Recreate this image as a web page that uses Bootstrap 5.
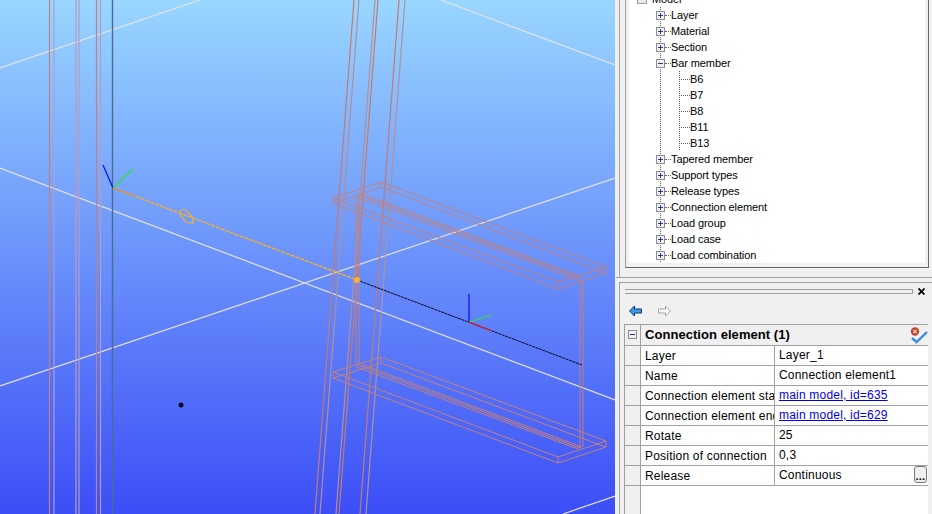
<!DOCTYPE html>
<html lang="en">
<head>
    <meta charset="UTF-8">
    <meta name="viewport" content="width=device-width, initial-scale=1.0">
    <link href="https://cdn.jsdelivr.net/npm/bootstrap@5.3.0/dist/css/bootstrap.min.css" rel="stylesheet">
    <title>Model</title>
    <style>
        body { width: 932px; height: 514px; overflow: hidden; background: #f0f0f0; font-family: "Liberation Sans", Arial, sans-serif; font-size: 11px; letter-spacing: -.1px; color: #000; }
        .view3d { width: 615px; height: 514px; flex: none; background: linear-gradient(#99d6ff, #3c4ef7); }
        .view3d svg { display: block; }
        .side { width: 317px; flex: none; }
        .pane-top { height: 277px; margin-left: 4px; border-left: 1px solid #a0a0a0; padding-left: 5px; }
        .tree-frame { width: 304px; height: 268px; overflow: hidden; background: #fff; border-left: 1px solid #a0a0a0; border-right: 1px solid #696969; border-bottom: 1px solid #696969; box-shadow: inset 3px 0 #f0f0f0, inset -3px 0 #f0f0f0, inset 0 -4px #f0f0f0; }
        .tree-root, .tree-kids { list-style: none; margin: 0; padding: 0; }
        .tree-model { margin-top: -9px; padding-left: 11px; }
        .tree-root { margin-left: 30px; background: linear-gradient(#606060 50%, transparent 50%) 4px 0 / 1px 2px repeat-y; }
        .tree-row { height: 16px; line-height: 16px; white-space: nowrap; }
        .tree-last { margin-bottom: -8px; }
        .tree-box { width: 9px; height: 9px; flex: none; }
        .tree-dash { width: 6px; flex: none; border-top: 1px dotted #606060; margin-right: 0; }
        .tree-kids { margin-left: 23px; background: linear-gradient(#606060 50%, transparent 50%) 0 0 / 1px 2px repeat-y; }
        .tree-kids .tree-dash { width: 11px; }
        .tree-gap { height: 8px; }
        .model-check { width: 10px; height: 10px; background: #e8e8e8; border: 1px solid #a0a0a0; margin-right: 5px; }
        .split { height: 5px; margin-left: 1px; border-top: 1px solid #a0a0a0; }
        .pane-bottom { height: 232px; margin-left: 4px; border-left: 1px solid #a0a0a0; border-top: 1px solid #a0a0a0; overflow: hidden; padding-left: 4px; font-size: 12px; letter-spacing: .2px; }
        .grip-row { margin-top: 6px; margin-left: 1px; height: 5px; width: 303px; }
        .grip-lines { width: 288px; height: 5px; border-top: 1px solid #a0a0a0; border-bottom: 1px solid #a0a0a0; border-right: 1px solid #a0a0a0; }
        .grip-close { margin-left: 5px; display: block; }
        .nav-row { margin-top: 11px; height: 13px; padding-left: 5px; }
        .prop-wrap { margin-top: 6px; width: 304px; border-top: 1px solid #a0a0a0; }
        .prop-table { table-layout: fixed; width: 304px; margin: 0; background: #fff; border-collapse: collapse; }
        .prop-table td { height: 20px; padding: 0; line-height: 18px; border: 0; border-bottom: 1px solid #a0a0a0; border-left: 1px solid #a0a0a0; white-space: nowrap; overflow: hidden; }
        .prop-table td.gutter { background: #f0f0f0; padding-left: 3px; }
        .prop-table td.prop-name { padding: 1px 0 0 4px; }
        .prop-table td.prop-val { padding: 0 0 1px 4px; }
        .prop-table tr.prop-head td { background: #f0f0f0; font-weight: 700; font-size: 13px; letter-spacing: .05px; padding-left: 4px; }
        .prop-table tr.prop-head td.gutter { padding: 0 0 0 3px; }
        .prop-table tr.prop-fill td { height: 40px; border-bottom: 0; }
        .prop-table a { color: #0000ee; }
        .head-icons { width: 18px; height: 19px; flex: none; }
        .more-btn { width: 13px; height: 17px; margin-right: 1px; border: 1px solid #777; border-radius: 3px; background: #efefef; font: bold 11px/19px "Liberation Sans", sans-serif; text-align: center; flex: none; }
    </style>
</head>
<body class="d-flex m-0">
    <svg width="0" height="0" class="d-block" style="position:absolute">
        <symbol id="boxPlus" viewBox="0 0 9 9"><rect x=".5" y=".5" width="8" height="8" fill="#f0f0f4" stroke="#8c8c8c"/><path d="M2 4.5h5M4.5 2v5" stroke="#23407e"/></symbol>
        <symbol id="boxMinus" viewBox="0 0 9 9"><rect x=".5" y=".5" width="8" height="8" fill="#f0f0f4" stroke="#8c8c8c"/><path d="M2 4.5h5" stroke="#23407e"/></symbol>
    </svg>

    <div class="view3d">
        <svg width="615" height="514" viewBox="0 0 615 514" fill="none">
            <g stroke="#e6e2de" stroke-width="1.2">
                <path d="M0 68L200 0M441 0L615 65M0 168L615 400M0 386L615 178M563 514L615 496"/>
            </g>
            <g stroke-width="1.2">
                <path d="M49.5 0V514M96.5 0V514" stroke="#bf8088"/>
                <path d="M54 0V514M76 0V514M79 0V514M100.5 0V514" stroke="#b89cc0"/>
                <path d="M112.5 0V514" stroke="#4c6a94" stroke-width="1.4"/>
                <path d="M354 0L315 514M378 0L339 514M399 0L360 514" stroke="#c47a72"/>
                <path d="M359 0L320 514M375 0L336 514M405 0L366 514" stroke="#b0909c"/>
            </g>
            <g stroke="#c4807a">
                <path d="M333 198L381 182L606 267L558 282ZM333 203L381 187L605 273L558 289ZM333 198V203M558 282V289M606 267V273M381 182V187"/>
                <path d="M356 197L578 280M359 195L580 278M362 194L582 277"/>
                <path d="M356 197V365M359 196V365M580 280V448M583 279V447"/>
                <path d="M333 372L381 357L606 441L558 457ZM333 378L381 363L606 447L558 463ZM333 372V378M558 457V463M606 441V447M381 357V363"/>
                <path d="M356 367L578 449M358 365L580 448M361 364L582 447"/>
            </g>
            <path d="M113 188L357 280" stroke="#ffb020" stroke-width="1.3" stroke-dasharray="4 1"/>
            <path d="M113 188L135 196" stroke="#f08030" stroke-width="1.2"/>
            <path d="M357 280L582 365" stroke="#0a0a20" stroke-width="1" stroke-dasharray="3 .6"/>
            <path d="M180 210L186 210L193 218L193 223L186 222L181 216Z" stroke="#f5ab3c" stroke-width="1.2"/>
            <circle cx="357" cy="280" r="3" fill="#ffb030"/>
            <path d="M113 188L103 165M469 322V294" stroke="#1414e6" stroke-width="1.3"/>
            <path d="M113 188L133 169M469 322L492 315" stroke="#30e040" stroke-width="1.3"/>
            <path d="M469 322L492 331" stroke="#f01818" stroke-width="1.3"/>
            <circle cx="181" cy="405" r="2.5" fill="#0a0a20"/>
        </svg>
    </div>

    <div class="side">
        <div class="pane-top">
            <div class="tree-frame">
                <div class="tree-model tree-row d-flex align-items-center">
                    <span class="model-check"></span><span>Model</span>
                </div>
                <ul class="tree-root">
                    <li class="tree-row d-flex align-items-center"><svg class="tree-box"><use href="#boxPlus"/></svg><span class="tree-dash"></span>Layer</li>
                    <li class="tree-row d-flex align-items-center"><svg class="tree-box"><use href="#boxPlus"/></svg><span class="tree-dash"></span>Material</li>
                    <li class="tree-row d-flex align-items-center"><svg class="tree-box"><use href="#boxPlus"/></svg><span class="tree-dash"></span>Section</li>
                    <li>
                        <div class="tree-row d-flex align-items-center"><svg class="tree-box"><use href="#boxMinus"/></svg><span class="tree-dash"></span>Bar member</div>
                        <ul class="tree-kids">
                            <li class="tree-row d-flex align-items-center"><span class="tree-dash"></span>B6</li>
                            <li class="tree-row d-flex align-items-center"><span class="tree-dash"></span>B7</li>
                            <li class="tree-row d-flex align-items-center"><span class="tree-dash"></span>B8</li>
                            <li class="tree-row d-flex align-items-center"><span class="tree-dash"></span>B11</li>
                            <li class="tree-row tree-last d-flex align-items-center"><span class="tree-dash"></span>B13</li>
                        </ul>
                        <div class="tree-gap"></div>
                    </li>
                    <li class="tree-row d-flex align-items-center"><svg class="tree-box"><use href="#boxPlus"/></svg><span class="tree-dash"></span>Tapered member</li>
                    <li class="tree-row d-flex align-items-center"><svg class="tree-box"><use href="#boxPlus"/></svg><span class="tree-dash"></span>Support types</li>
                    <li class="tree-row d-flex align-items-center"><svg class="tree-box"><use href="#boxPlus"/></svg><span class="tree-dash"></span>Release types</li>
                    <li class="tree-row d-flex align-items-center"><svg class="tree-box"><use href="#boxPlus"/></svg><span class="tree-dash"></span>Connection element</li>
                    <li class="tree-row d-flex align-items-center"><svg class="tree-box"><use href="#boxPlus"/></svg><span class="tree-dash"></span>Load group</li>
                    <li class="tree-row d-flex align-items-center"><svg class="tree-box"><use href="#boxPlus"/></svg><span class="tree-dash"></span>Load case</li>
                    <li class="tree-row tree-last d-flex align-items-center"><svg class="tree-box"><use href="#boxPlus"/></svg><span class="tree-dash"></span>Load combination</li>
                </ul>
            </div>
        </div>
        <div class="split"></div>
        <div class="pane-bottom">
            <div class="grip-row d-flex align-items-center">
                <div class="grip-lines"></div>
                <svg class="grip-close" width="7" height="7" viewBox="0 0 7 7"><path d="M.5 .5L6.5 6.5M6.5 .5L.5 6.5" stroke="#000" stroke-width="1.8"/></svg>
            </div>
            <div class="nav-row d-flex gap-3">
                <svg width="13" height="12" viewBox="0 0 13 12"><path d="M.5 6L5.5 1V4H12.5V8H5.5V11Z" fill="#3d9ae8" stroke="#10307a"/></svg>
                <svg width="13" height="12" viewBox="0 0 13 12"><path d="M12.5 6L7.5 1V4H.5V8H7.5V11Z" fill="#f6f6f6" stroke="#a4a4a4"/></svg>
            </div>
            <div class="prop-wrap">
                <table class="prop-table">
                    <colgroup><col style="width:16px"><col style="width:134px"><col></colgroup>
                    <tr class="prop-head">
                        <td class="gutter"><svg width="9" height="9" class="d-block"><use href="#boxMinus"/></svg></td>
                        <td colspan="2">
                            <div class="d-flex justify-content-between align-items-center">
                                <span>Connection element (1)</span>
                                <svg class="head-icons" viewBox="0 0 18 19" fill="none">
                                    <circle cx="5" cy="6.5" r="4.2" fill="#c0452e"/>
                                    <path d="M3.3 4.8L6.7 8.2M6.7 4.8L3.3 8.2" stroke="#f4d8d0" stroke-width="1.2"/>
                                    <path d="M2 13L6.5 17L17 7" stroke="#3a8ee6" stroke-width="2.4"/>
                                </svg>
                            </div>
                        </td>
                    </tr>
                    <tr><td class="gutter"></td><td class="prop-name">Layer</td><td class="prop-val">Layer_1</td></tr>
                    <tr><td class="gutter"></td><td class="prop-name">Name</td><td class="prop-val">Connection element1</td></tr>
                    <tr><td class="gutter"></td><td class="prop-name">Connection element start</td><td class="prop-val"><a href="#">main model, id=635</a></td></tr>
                    <tr><td class="gutter"></td><td class="prop-name">Connection element end</td><td class="prop-val"><a href="#">main model, id=629</a></td></tr>
                    <tr><td class="gutter"></td><td class="prop-name">Rotate</td><td class="prop-val">25</td></tr>
                    <tr><td class="gutter"></td><td class="prop-name">Position of connection</td><td class="prop-val">0,3</td></tr>
                    <tr><td class="gutter"></td><td class="prop-name">Release</td><td class="prop-val"><div class="d-flex justify-content-between align-items-center"><span>Continuous</span><span class="more-btn">...</span></div></td></tr>
                    <tr class="prop-fill"><td class="gutter"></td><td colspan="2"></td></tr>
                </table>
            </div>
        </div>
    </div>
    <script src="https://cdn.jsdelivr.net/npm/bootstrap@5.3.0/dist/js/bootstrap.bundle.min.js"></script>
</body>
</html>
